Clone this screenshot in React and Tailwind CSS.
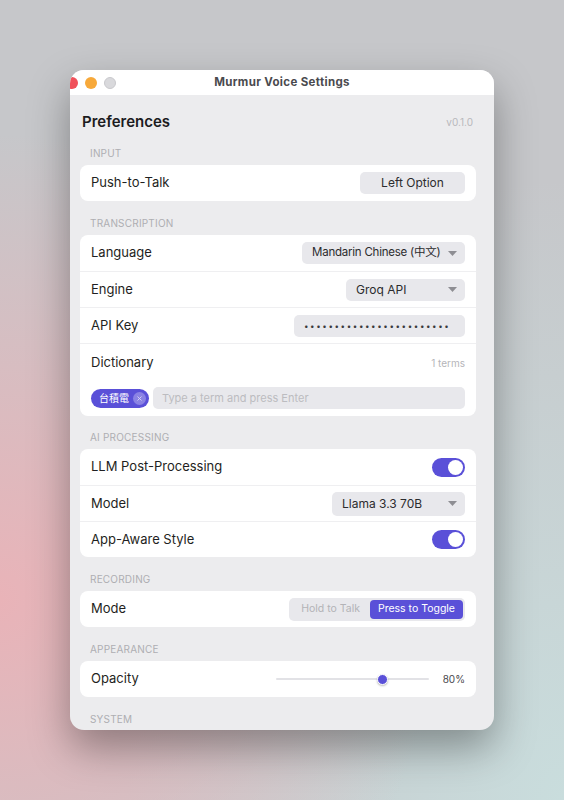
const font = { fontFamily: "Inter, 'Noto Sans CJK TC', sans-serif" };

const SectionLabel = ({ children, className = "" }) => (
  <div className={`px-[10px] text-[10px] leading-[12px] tracking-[0.02em] text-[#aeaeb2] uppercase ${className}`}>
    {children}
  </div>
);

const Row = ({ label, children, first }) => (
  <div className={`flex items-center justify-between h-[36px] px-[11px] ${first ? "" : "border-t border-[#efeff1]"}`}>
    <span className="text-[13px] text-[#1f1f22]">{label}</span>
    {children}
  </div>
);

const Caret = () => (
  <svg width="9" height="5" viewBox="0 0 9 5" className="shrink-0">
    <path d="M0 0h9L4.5 5z" fill="#8e8e93" />
  </svg>
);

const Select = ({ value, width, text = "text-[12px]" }) => (
  <div className={`flex items-center justify-between h-[22px] rounded-[5px] bg-[#e8e8ec] pl-[10px] pr-[8px] ${width}`}>
    <span className={`${text} text-[#2c2c2e] whitespace-nowrap`}>{value}</span>
    <Caret />
  </div>
);

const Toggle = () => (
  <div className="w-[33px] h-[19px] rounded-full bg-[#5a50d8] p-[2px] flex justify-end">
    <div className="w-[15px] h-[15px] rounded-full bg-white" />
  </div>
);

const Card = ({ children }) => (
  <div className="bg-white rounded-[8px] overflow-hidden">{children}</div>
);

export default function App() {
  return (
    <div
      className="w-full h-[800px] flex items-center justify-center bg-[#c6c7ca] bg-[radial-gradient(ellipse_at_0%_75%,#e9b3b8_0%,rgba(233,179,184,0)_55%),radial-gradient(ellipse_at_100%_100%,#c9dddd_0%,rgba(201,221,221,0)_55%)]"
      style={font}
    >
      <div className="w-[424px] h-[660px] rounded-[14px] overflow-hidden bg-[#ececee] flex flex-col shadow-[0_18px_40px_rgba(0,0,0,0.35)]">
        {/* title bar */}
        <div className="relative h-[25px] bg-white flex items-center shrink-0">
          <div className="flex items-center gap-[7px] -ml-[4px]">
            <span className="w-[12px] h-[12px] rounded-full bg-[#f0505a]" />
            <span className="w-[12px] h-[12px] rounded-full bg-[#f7a93a]" />
            <span className="w-[12px] h-[12px] rounded-full bg-[#d9d9dc] border border-[#c8c8cc]" />
          </div>
          <div className="absolute inset-0 flex items-center justify-center text-[11.5px] font-bold text-[#4a4a4e] tracking-[0.03em]">
            Murmur Voice Settings
          </div>
        </div>

        {/* body */}
        <div className="flex-1 overflow-hidden pl-[10px] pr-[18px] pt-[17px]">
          <div className="flex items-center justify-between h-5 pl-[2px] pr-[3px]">
            <span className="text-[15px] font-semibold text-[#1c1c1e]">Preferences</span>
            <span className="text-[10px] text-[#b8b8bc]">v0.1.0</span>
          </div>

          <SectionLabel className="mt-[15px] mb-[6px]">Input</SectionLabel>
          <Card>
            <Row label="Push-to-Talk" first>
              <div className="w-[105px] h-[22px] rounded-[5px] bg-[#e8e8ec] flex items-center justify-center text-[12px] text-[#2c2c2e]">
                Left Option
              </div>
            </Row>
          </Card>

          <SectionLabel className="mt-[16px] mb-[6px]">Transcription</SectionLabel>
          <Card>
            <Row label="Language" first>
              <Select value="Mandarin Chinese (中文)" width="w-[163px]" text="text-[11.5px] tracking-[-0.02em]" />
            </Row>
            <Row label="Engine">
              <Select value="Groq API" width="w-[119px]" />
            </Row>
            <Row label="API Key">
              <div className="w-[171px] h-[22px] rounded-[5px] bg-[#e8e8ec] flex items-center px-[10px] text-[8px] tracking-[1.6px] text-[#3a3a3c] overflow-hidden whitespace-nowrap">
                ••••••••••••••••••••••••
              </div>
            </Row>
            <div className="border-t border-[#efeff1] px-[11px] pt-[11px] pb-[7px]">
              <div className="flex items-center justify-between h-4">
                <span className="text-[13px] text-[#1f1f22]">Dictionary</span>
                <span className="text-[10px] text-[#b5b5b9]">1 terms</span>
              </div>
              <div className="flex items-center gap-[4px] mt-[16px]">
                <div className="h-[19px] rounded-full bg-[#5a50d8] flex items-center gap-[4px] pl-[8px] pr-[3px]">
                  <span className="text-[10px] text-white leading-none">台積電</span>
                  <span className="w-[13px] h-[13px] rounded-full bg-[#8a82e4] flex items-center justify-center">
                    <svg width="5" height="5" viewBox="0 0 5 5">
                      <path d="M0.5 0.5l4 4M4.5 0.5l-4 4" stroke="#d8d5f6" strokeWidth="0.9" />
                    </svg>
                  </span>
                </div>
                <div className="flex-1 h-[22px] rounded-[5px] bg-[#e8e8ec] flex items-center px-[9px] text-[11px] text-[#bcbcc0]">
                  Type a term and press Enter
                </div>
              </div>
            </div>
          </Card>

          <SectionLabel className="mt-[15px] mb-[6px]">AI Processing</SectionLabel>
          <Card>
            <Row label="LLM Post-Processing" first>
              <Toggle />
            </Row>
            <Row label="Model">
              <div className="flex items-center justify-between h-[24px] w-[133px] rounded-[5px] bg-[#e8e8ec] pl-[10px] pr-[8px]">
                <span className="text-[12px] text-[#2c2c2e]">Llama 3.3 70B</span>
                <Caret />
              </div>
            </Row>
            <Row label="App-Aware Style">
              <Toggle />
            </Row>
          </Card>

          <SectionLabel className="mt-[16px] mb-[6px]">Recording</SectionLabel>
          <Card>
            <Row label="Mode" first>
              <div className="flex items-center h-[23px] rounded-[5px] bg-[#e8e8ec] p-[2px]">
                <span className="px-[10px] text-[10.5px] text-[#b3b3b7]">Hold to Talk</span>
                <span className="h-full flex items-center px-[8px] rounded-[4px] bg-[#5a50d8] text-[10.5px] text-white">
                  Press to Toggle
                </span>
              </div>
            </Row>
          </Card>

          <SectionLabel className="mt-[16px] mb-[6px]">Appearance</SectionLabel>
          <Card>
            <Row label="Opacity" first>
              <div className="flex items-center gap-[13px]">
                <div className="relative w-[153px] h-[10px] flex items-center">
                  <div className="w-full h-[2px] rounded-full bg-[#e2e2e6]" />
                  <div className="absolute left-[101px] w-[11px] h-[11px] rounded-full bg-[#5a50d8] border border-white shadow-[0_1px_2px_rgba(0,0,0,0.25)]" />
                </div>
                <span className="text-[10px] text-[#48484c] w-[23px] text-right">80%</span>
              </div>
            </Row>
          </Card>

          <SectionLabel className="mt-[16px]">System</SectionLabel>
        </div>
      </div>
    </div>
  );
}
